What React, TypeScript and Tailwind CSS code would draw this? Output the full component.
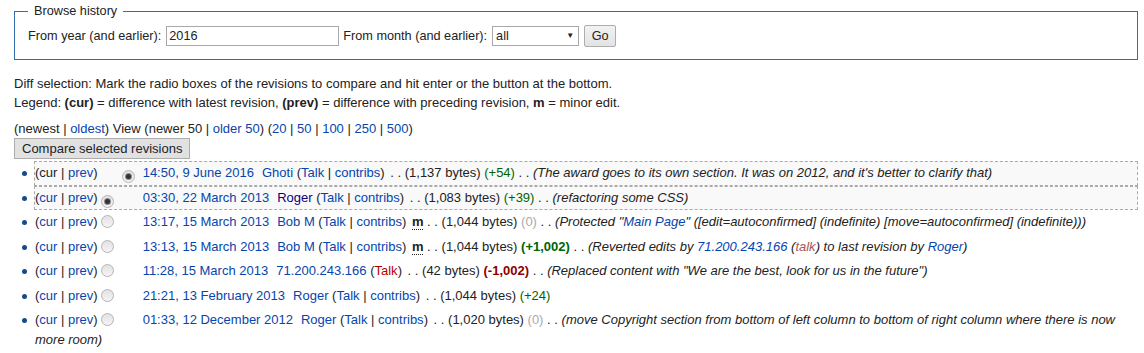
import React from "react";

const L = ({ children, c = "text-[#0645ad]" }: { children: React.ReactNode; c?: string }) => (
  <a className={`${c} cursor-pointer`}>{children}</a>
);

const Radio = ({ checked = false, hidden = false, cls = "" }: { checked?: boolean; hidden?: boolean; cls?: string }) => (
  <span
    className={`inline-flex items-center justify-center w-[13px] h-[13px] rounded-full border border-[#b4b4b4] bg-gradient-to-b from-[#e2e2e2] to-[#f4f4f4] align-[-2px] ${hidden ? "invisible" : ""} ${cls}`}
  >
    {checked && <span className="w-[5px] h-[5px] rounded-full bg-[#333] shadow-[0_0_0_1px_#8a8a8a]" />}
  </span>
);

type Row = {
  curLink: boolean;
  r1: "hidden" | "checked" | "unchecked";
  r2: "hidden" | "checked";
  date: string;
  user: React.ReactNode;
  minor?: boolean;
  bytes: string;
  diff: React.ReactNode;
  comment?: React.ReactNode;
  selected?: boolean;
};

const Sep = () => <span>. .</span>;

const rows: Row[] = [
  {
    curLink: false,
    r1: "hidden",
    r2: "checked",
    date: "14:50, 9 June 2016",
    user: (
      <>
        <L>Ghoti</L> (<L>Talk</L> | <L>contribs</L>)
      </>
    ),
    bytes: "(1,137 bytes)",
    diff: <span className="text-[#006400]">(+54)</span>,
    comment: <>(The award goes to its own section. It was on 2012, and it's better to clarify that)</>,
    selected: true,
  },
  {
    curLink: true,
    r1: "checked",
    r2: "hidden",
    date: "03:30, 22 March 2013",
    user: (
      <>
        <L c="text-[#0b0080]">Roger</L> (<L>Talk</L> | <L>contribs</L>)
      </>
    ),
    bytes: "(1,083 bytes)",
    diff: <span className="text-[#006400]">(+39)</span>,
    comment: <>(refactoring some CSS)</>,
    selected: true,
  },
  {
    curLink: true,
    r1: "unchecked",
    r2: "hidden",
    date: "13:17, 15 March 2013",
    user: (
      <>
        <L>Bob M</L> (<L>Talk</L> | <L>contribs</L>)
      </>
    ),
    minor: true,
    bytes: "(1,044 bytes)",
    diff: <span className="text-[#aaaaaa]">(0)</span>,
    comment: (
      <>
        (Protected "<L>Main Page</L>" ([edit=autoconfirmed] (indefinite) [move=autoconfirmed] (indefinite)))
      </>
    ),
  },
  {
    curLink: true,
    r1: "unchecked",
    r2: "hidden",
    date: "13:13, 15 March 2013",
    user: (
      <>
        <L>Bob M</L> (<L>Talk</L> | <L>contribs</L>)
      </>
    ),
    minor: true,
    bytes: "(1,044 bytes)",
    diff: <span className="text-[#006400] font-bold">(+1,002)</span>,
    comment: (
      <>
        (Reverted edits by <L>71.200.243.166</L> (<L c="text-[#a55858]">talk</L>) to last revision by <L>Roger</L>)
      </>
    ),
  },
  {
    curLink: true,
    r1: "unchecked",
    r2: "hidden",
    date: "11:28, 15 March 2013",
    user: (
      <>
        <L>71.200.243.166</L> (<L c="text-[#ba0000]">Talk</L>)
      </>
    ),
    bytes: "(42 bytes)",
    diff: <span className="text-[#8b0000] font-bold">(-1,002)</span>,
    comment: <>(Replaced content with "We are the best, look for us in the future")</>,
  },
  {
    curLink: true,
    r1: "unchecked",
    r2: "hidden",
    date: "21:21, 13 February 2013",
    user: (
      <>
        <L>Roger</L> (<L>Talk</L> | <L>contribs</L>)
      </>
    ),
    bytes: "(1,044 bytes)",
    diff: <span className="text-[#006400]">(+24)</span>,
  },
  {
    curLink: true,
    r1: "unchecked",
    r2: "hidden",
    date: "01:33, 12 December 2012",
    user: (
      <>
        <L>Roger</L> (<L>Talk</L> | <L>contribs</L>)
      </>
    ),
    bytes: "(1,020 bytes)",
    diff: <span className="text-[#aaaaaa]">(0)</span>,
    comment: <>(move Copyright section from bottom of left column to bottom of right column where there is now more room)</>,
  },
];

export default function App() {
  return (
    <div className="w-[1144px] h-[353px] overflow-hidden bg-white text-[#222] text-[13px] leading-[19px] pl-[14px] pr-[6px] pt-[2px]" style={{ fontFamily: '"Liberation Sans", Arial, sans-serif' }}>
      <fieldset className="border border-[#2f6fab] px-[13px] pt-[4px] pb-[12px] m-0">
        <legend className="px-[6px] ml-0 text-[12.7px]">Browse history</legend>
        <div className="flex items-center h-[22px] text-[12.7px]">
          <span>From year (and earlier):</span>
          <span className="ml-[5px] w-[173px] h-[20px] border border-[#a9a9a9] px-[2px] flex items-center">2016</span>
          <span className="ml-[4px]">From month (and earlier):</span>
          <span className="ml-[5px] w-[87px] h-[20px] border border-[#a9a9a9] pl-[3px] pr-[4px] flex items-center justify-between">
            <span>all</span>
            <span className="text-[8px] leading-none">▼</span>
          </span>
          <span className="ml-[5px] w-[32px] h-[22px] border border-[#adadad] bg-gradient-to-b from-[#f2f2f2] to-[#e3e3e3] flex items-center justify-center rounded-[2px]">Go</span>
        </div>
      </fieldset>
      <div className="mt-[14px]">
        <div>Diff selection: Mark the radio boxes of the revisions to compare and hit enter or the button at the bottom.</div>
        <div>
          Legend: <b>(cur)</b> = difference with latest revision, <b>(prev)</b> = difference with preceding revision, <b>m</b> = minor edit.
        </div>
      </div>
      <div className="mt-[7px]">
        (newest | <L>oldest</L>) View (newer 50 | <L>older 50</L>) (<L>20</L> | <L>50</L> | <L>100</L> | <L>250</L> | <L>500</L>)
      </div>
      <div className="inline-flex items-center h-[21px] px-[7px] border border-[#adadad] bg-[#e1e1e1]">Compare selected revisions</div>
      <ul className="mt-[2px]">
        {rows.map((r, i) => (
          <li key={i} className="flex">
            <div className="w-[20px] shrink-0 pt-[10px] pl-[8px]">
              <span className="block w-[5px] h-[5px] rounded-full bg-[#174a8b]" />
            </div>
            <div
              className={`flex-1 border leading-[20px] pt-[1.25px] pb-[1.25px] ${
                r.selected ? "border-dashed border-[#aaaaaa] bg-[#f9f9f9]" : "border-transparent"
              }`}
            >
              <span>
                ({r.curLink ? <L>cur</L> : "cur"} | <L>prev</L>)
              </span>
              <Radio cls="ml-[3px]" checked={r.r1 === "checked"} hidden={r.r1 === "hidden"} />
              <Radio cls="ml-[8px]" checked={r.r2 === "checked"} hidden={r.r2 === "hidden"} />
              <span className="ml-[8px]">
                <L>{r.date}</L>
              </span>
              <span className="ml-[8px] mr-[2px]">{r.user}</span>
              {r.minor && (
                <>
                  {" "}
                  <abbr className="font-bold no-underline border-b border-dotted border-[#222]">m</abbr>
                </>
              )}{" "}
              <Sep /> {r.bytes} {r.diff}
              {r.comment && (
                <>
                  {" "}
                  <Sep /> <i>{r.comment}</i>
                </>
              )}
            </div>
          </li>
        ))}
      </ul>
    </div>
  );
}
